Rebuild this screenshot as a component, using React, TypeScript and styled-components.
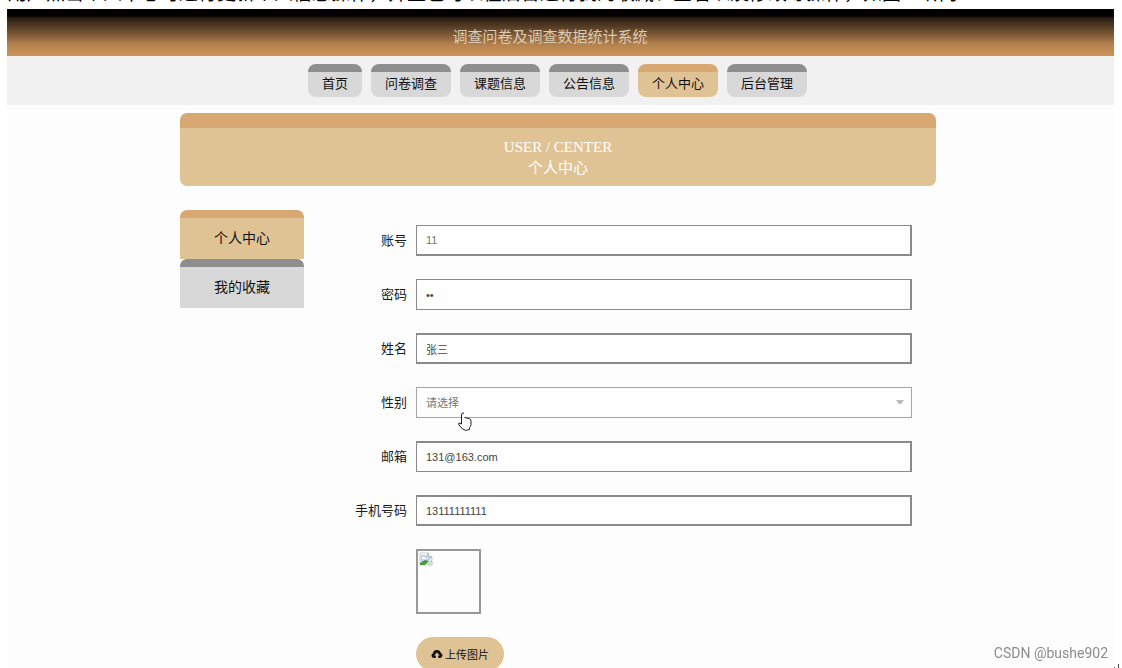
import React from 'react';
import styled, { createGlobalStyle } from 'styled-components';

const GlobalStyle = createGlobalStyle`
  *, *::before, *::after { box-sizing: border-box; }
  html { scrollbar-width: none; background: #fff; }
  body {
    margin: 0;
    color: #1c1c1c;
    font-family: "Liberation Sans", "Noto Sans CJK SC", sans-serif;
    font-size: 13px;
  }
  input, select, button { font-family: inherit; margin: 0; }
`;

const Intro = styled.p`
  display: flex;
  align-items: flex-end;
  height: 9px;
  margin: 0;
  padding: 0 8px 5px;
  overflow: hidden;
  white-space: nowrap;
  color: #000;
  font-family: "Liberation Serif", "Noto Sans CJK SC", serif;
  font-size: 19px;
  line-height: 20px;
`;

const Site = styled.div`
  margin: 0 8px 0 7px;
  background: #fdfdfd;
`;

const Header = styled.header`
  display: flex;
  align-items: center;
  justify-content: center;
  height: 47px;
  padding: 8px 21px 0 0;
  background: linear-gradient(#000 0, #050302 7px, #2b1e14 9px, #6b4c2f 22px, #b5834f 36px, #cd9258 47px);
`;

const SiteTitle = styled.h1`
  margin: 0;
  color: #dccbb4;
  font-size: 15px;
  font-weight: 400;
  line-height: 20px;
`;

const Nav = styled.nav`
  display: flex;
  justify-content: center;
  gap: 9px;
  padding: 8px 6px 8px 0;
  background: #f1f1f1;
`;

const NavLink = styled.a<{ $active?: boolean }>`
  height: 33px;
  padding: 0 14px;
  border-top: 8px solid ${p => (p.$active ? '#d8a873' : '#8e8e8e')};
  border-radius: 8px;
  background: ${p => (p.$active ? '#e0c395' : '#d8d8d8')};
  color: #111;
  line-height: 24px;
  text-decoration: none;
`;

const Container = styled.main`
  width: 761px;
  max-width: 100%;
  margin: 0 auto;
  padding: 8px 5px 24px 0;
`;

const Banner = styled.section`
  display: flex;
  flex-direction: column;
  align-items: center;
  height: 73px;
  padding-top: 9px;
  border-top: 15px solid #d8a873;
  border-radius: 7px;
  background: #e0c395;
  color: #fff;
`;

const BannerTitle = styled.h2`
  margin: 0;
  font-family: "Liberation Serif", "Noto Sans CJK SC", serif;
  font-size: 15px;
  font-weight: 400;
  line-height: 21px;
`;

const Columns = styled.div`
  display: flex;
  margin-top: 24px;
`;

const Side = styled.aside`
  display: flex;
  flex-direction: column;
  width: 124px;
`;

const SideLink = styled.a<{ $active?: boolean }>`
  height: 49px;
  border-top: 8px solid ${p => (p.$active ? '#d8a873' : '#8e8e8e')};
  border-radius: 7px 7px 0 0;
  background: ${p => (p.$active ? '#e0c395' : '#d8d8d8')};
  color: #111;
  font-size: 14px;
  line-height: 40px;
  text-align: center;
  text-decoration: none;
`;

const Form = styled.form`
  flex: 1;
  display: flex;
  flex-direction: column;
  gap: 23px;
  padding: 15px 24px 0 0;
`;

const Row = styled.div`
  display: flex;
  align-items: center;
`;

const Label = styled.label`
  width: 112px;
  padding-right: 9px;
  text-align: right;
  line-height: 20px;
`;

const Input = styled.input<{ $top: number; $bottom: number }>`
  flex: 1;
  min-width: 0;
  height: 31px;
  padding: 0 9px;
  border: solid #8a8a8a;
  border-width: ${p => p.$top}px 2px ${p => p.$bottom}px 1px;
  border-radius: 0;
  outline: none;
  background: #fefefe;
  color: #444;
  font-size: 11px;

  &:read-only { color: #777; }
`;

const SelectWrap = styled.div`
  position: relative;
  flex: 1;
`;

const Select = styled.select`
  display: block;
  width: 100%;
  height: 31px;
  padding: 0 9px;
  appearance: none;
  border: 1px solid #a5a5a5;
  border-radius: 0;
  background: #fefefe;
  color: #777;
  font-size: 11px;
`;

const Arrow = styled.svg`
  position: absolute;
  top: 13px;
  right: 8px;
  pointer-events: none;
`;

const Pointer = styled.svg`
  position: absolute;
  top: 25px;
  left: 41px;
  pointer-events: none;
`;

const Upload = styled.div`
  display: flex;
  flex-direction: column;
  align-items: flex-start;
  gap: 23px;
  margin-left: 112px;
`;

const Preview = styled.div`
  width: 65px;
  height: 65px;
  padding: 1px;
  border: 2px solid #989898;
`;

const UploadButton = styled.button`
  display: flex;
  align-items: center;
  justify-content: center;
  gap: 2px;
  width: 88px;
  height: 34px;
  padding: 0;
  border: 0;
  border-radius: 17px;
  background: #e0c395;
  color: #111;
  font-size: 11px;
`;

const Watermark = styled.footer`
  position: fixed;
  right: 14px;
  bottom: 5px;
  color: #8b8b8b;
  font-family: Roboto, sans-serif;
  font-size: 14px;
  line-height: 20px;
`;

const EndMark = styled.svg`
  position: fixed;
  right: 1px;
  bottom: 0;
`;

const navItems = ['首页', '问卷调查', '课题信息', '公告信息', '个人中心', '后台管理'];
const sideItems = ['个人中心', '我的收藏'];

type Field = { id: string; label: string; value: string; type?: string; readOnly?: boolean; top: number; bottom: number };

const accountFields: Field[] = [
  { id: 'account', label: '账号', value: '11', readOnly: true, top: 1, bottom: 2 },
  { id: 'password', label: '密码', value: '11', type: 'password', top: 1, bottom: 1 },
  { id: 'name', label: '姓名', value: '张三', top: 2, bottom: 2 },
];

const contactFields: Field[] = [
  { id: 'email', label: '邮箱', value: '131@163.com', top: 2, bottom: 1 },
  { id: 'phone', label: '手机号码', value: '13111111111', top: 2, bottom: 2 },
];

function TextField({ field }: { field: Field }) {
  return (
    <Row>
      <Label htmlFor={field.id}>{field.label}</Label>
      <Input
        id={field.id}
        type={field.type ?? 'text'}
        defaultValue={field.value}
        readOnly={field.readOnly}
        $top={field.top}
        $bottom={field.bottom}
      />
    </Row>
  );
}

export default function App() {
  return (
    <>
      <GlobalStyle />
      <Intro>用户点击个人中心可进行更新个人信息操作，并且也可以在后台进行我的收藏、查看以及修改等操作，如图5-5所示</Intro>
      <Site>
        <Header>
          <SiteTitle>调查问卷及调查数据统计系统</SiteTitle>
        </Header>
        <Nav>
          {navItems.map(item => (
            <NavLink key={item} href="#" $active={item === '个人中心'}>{item}</NavLink>
          ))}
        </Nav>
        <Container>
          <Banner>
            <BannerTitle>USER / CENTER</BannerTitle>
            <BannerTitle>个人中心</BannerTitle>
          </Banner>
          <Columns>
            <Side>
              {sideItems.map(item => (
                <SideLink key={item} href="#" $active={item === '个人中心'}>{item}</SideLink>
              ))}
            </Side>
            <Form onSubmit={e => e.preventDefault()}>
              {accountFields.map(f => <TextField key={f.id} field={f} />)}
              <Row>
                <Label htmlFor="gender">性别</Label>
                <SelectWrap>
                  <Select id="gender" defaultValue="">
                    <option value="">请选择</option>
                    <option value="m">男</option>
                    <option value="f">女</option>
                  </Select>
                  <Arrow width="8" height="5" viewBox="0 0 8 5" aria-hidden="true">
                    <path d="M0 0h8L5 4H3z" fill="#b9b9b9" />
                  </Arrow>
                  <Pointer width="16" height="20" viewBox="0 0 16 20" aria-hidden="true">
                    <path
                      d="M4.5 12V2.5Q4.5 1 6 1t1.500 1.500V6L12 6.500q2 .5 2 2.500v4q0 2-1.500 3.500V18q-3 1.500-6 0L2 12.500Q1 11 2.500 11z"
                      fill="#fff"
                    />
                    <path
                      d="M7 1Q4.500 .5 4.500 3v9L2 11q-1 .5 0 2l3.500 4q3 2.500 7 .5v-2q1.500-1 1.500-3V9q0-2-2-2.500L7.500 5.500"
                      fill="none"
                      stroke="#222"
                    />
                  </Pointer>
                </SelectWrap>
              </Row>
              {contactFields.map(f => <TextField key={f.id} field={f} />)}
              <Upload>
                <Preview>
                  <svg width="14" height="14" viewBox="0 0 14 14" role="img" aria-label="头像">
                    <path d="M1 1h8l4 4v3l-6 5H1z" fill="#fff" stroke="#c9ccd0" />
                    <path d="M1.500 3h6.500v3h4v1l-5 5H1.500z" fill="#bfd4f3" />
                    <path d="M3 6q1-2 2.500-1T8 7H3z" fill="#fff" />
                    <path d="M1 13v-2l5-3 4 1-4 4z" fill="#4a9b35" />
                    <path d="M9 1v4h4" fill="#fff" stroke="#8d9297" />
                    <path d="M13 9v4H9z" fill="#fff" stroke="#b5b9bd" />
                  </svg>
                </Preview>
                <UploadButton type="button">
                  <svg width="12" height="10" viewBox="0 0 12 10" aria-hidden="true">
                    <path d="M3 9a2.500 2.500 0 0 1-1-4.800A4 4 0 0 1 9.800 4 2.600 2.600 0 0 1 9 9H7.200V6.500h1.600L6 3.500 3.200 6.500h1.600V9z" fill="#111" />
                  </svg>
                  上传图片
                </UploadButton>
              </Upload>
            </Form>
          </Columns>
        </Container>
      </Site>
      <Watermark>CSDN @bushe902</Watermark>
      <EndMark width="7" height="4" viewBox="0 0 7 4" aria-hidden="true">
        <path d="M0 3h1v1H0zM4 0h1v4H4z" fill="#555" />
      </EndMark>
    </>
  );
}
